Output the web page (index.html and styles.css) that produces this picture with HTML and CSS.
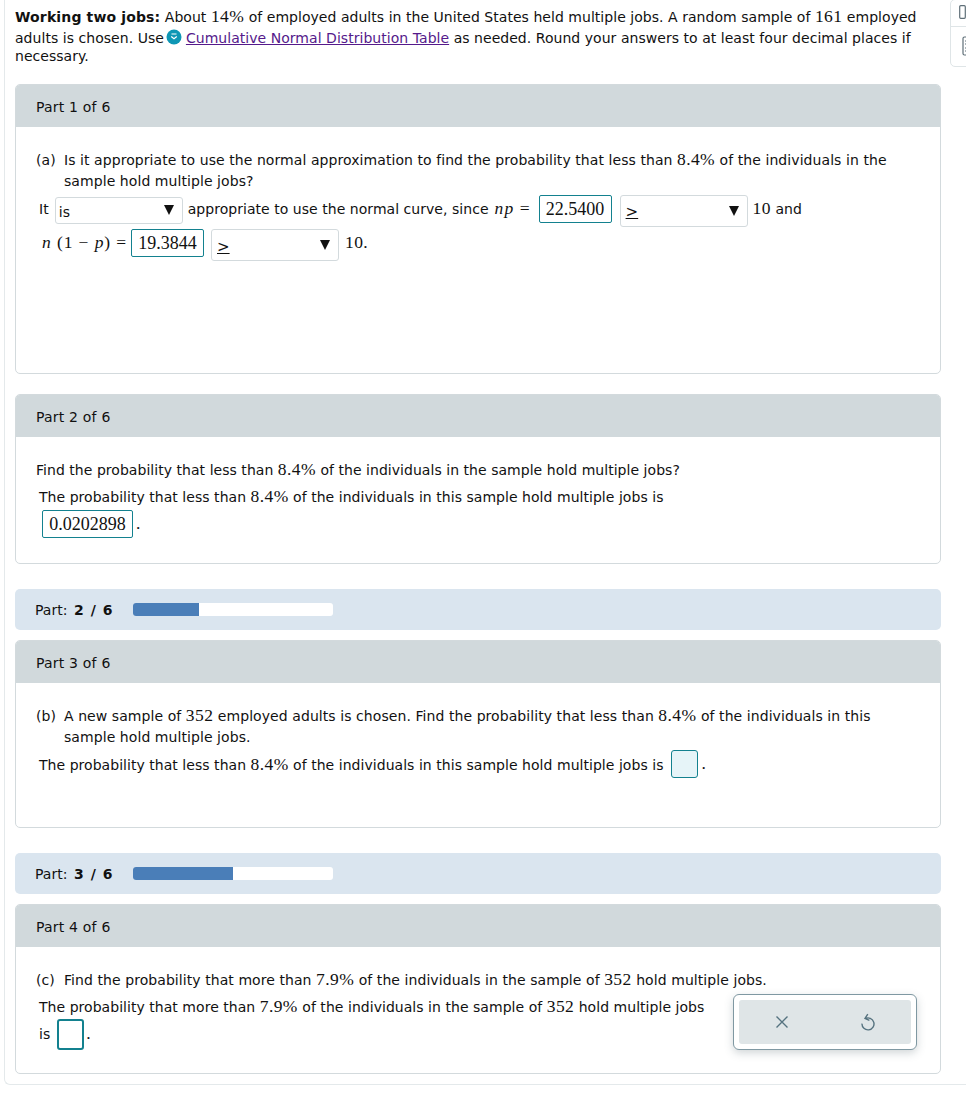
FILE: index.html
```html
<!DOCTYPE html>
<html lang="en">
<head>
<meta charset="utf-8">
<title>Working two jobs</title>
<link rel="stylesheet" href="styles.css">
</head>
<body>
<main class="sheet">
  <div class="intro">
    <div class="line"><b>Working two jobs:</b> About <span class="m">14%</span> of employed adults in the United States held multiple jobs. A random sample of <span class="m">161</span> employed</div>
    <div class="line">adults is chosen. Use <svg class="badge" viewBox="0 0 16 16" width="16" height="16"><circle cx="8" cy="8" r="7.5" fill="#0e97b5"/><path d="M5.5 5h5M5.2 7.5l2.8 2.2 2.8-2.2" fill="none" stroke="#fff" stroke-width="1.2"/></svg> <a href="#">Cumulative Normal Distribution Table</a> as needed. Round your answers to at least four decimal places if</div>
    <div class="line short">necessary.</div>
  </div>

  <section class="card c1">
    <header class="head">Part 1 of 6</header>
    <div class="body">
      <div class="q"><span class="tag">(a)</span><span>Is it appropriate to use the normal approximation to find the probability that less than <span class="m">8.4%</span> of the individuals in the<br>sample hold multiple jobs?</span></div>
      <div class="row r1">
        <span>It</span>
        <span class="sel sel-a"><span class="small">is</span><i class="tri"></i></span>
        <span>appropriate to use the normal curve, since</span>
        <span class="m eq"><em>np</em> =</span>
        <span class="ans">22.5400</span>
        <span class="sel sel-b"><u class="ge">&gt;</u><i class="tri"></i></span>
        <span><span class="m">10</span> and</span>
      </div>
      <div class="row r2">
        <span class="m eq2"><em>n</em> (1 − <em>p</em>) =</span>
        <span class="ans">19.3844</span>
        <span class="sel sel-b"><u class="ge">&gt;</u><i class="tri"></i></span>
        <span class="m">10.</span>
      </div>
    </div>
  </section>

  <section class="card c2">
    <header class="head">Part 2 of 6</header>
    <div class="body">
      <div class="plain">Find the probability that less than <span class="m">8.4%</span> of the individuals in the sample hold multiple jobs?</div>
      <div class="para">The probability that less than <span class="m">8.4%</span> of the individuals in this sample hold multiple jobs is</div>
      <div class="row r3"><span class="ans wide">0.0202898</span><span class="m">.</span></div>
    </div>
  </section>

  <div class="progress p2">
    <span>Part: <b>2 / 6</b></span>
    <span class="track"><span class="fill" style="width:33%"></span></span>
  </div>

  <section class="card c3">
    <header class="head">Part 3 of 6</header>
    <div class="body">
      <div class="q"><span class="tag">(b)</span><span>A new sample of <span class="m">352</span> employed adults is chosen. Find the probability that less than <span class="m">8.4%</span> of the individuals in this<br>sample hold multiple jobs.</span></div>
      <div class="row r4"><span class="r4-text">The probability that less than <span class="m">8.4%</span> of the individuals in this sample hold multiple jobs is</span><span class="blank tint"></span><span class="m">.</span></div>
    </div>
  </section>

  <div class="progress p3">
    <span>Part: <b>3 / 6</b></span>
    <span class="track"><span class="fill" style="width:50%"></span></span>
  </div>

  <section class="card c4">
    <header class="head">Part 4 of 6</header>
    <div class="body">
      <div class="q"><span class="tag">(c)</span><span>Find the probability that more than <span class="m">7.9%</span> of the individuals in the sample of <span class="m">352</span> hold multiple jobs.</span></div>
      <div class="para p4">The probability that more than <span class="m">7.9%</span> of the individuals in the sample of <span class="m">352</span> hold multiple jobs</div>
      <div class="row r5"><span>is</span><span class="blank thick"></span><span class="m">.</span></div>
    </div>
  </section>
</main>

<aside class="tools">
  <svg class="tool-a" viewBox="0 0 7 14" width="7" height="14"><rect x="0.7" y="0.7" width="5.6" height="12.6" rx="1" fill="none" stroke="#5f6f78" stroke-width="1.2"/></svg>
  <div class="tool-sep"></div>
  <svg class="tool-b" viewBox="0 0 12 20" width="12" height="20"><rect x="1" y="1" width="11" height="18" rx="1.5" fill="none" stroke="#5f6f78" stroke-width="1.2"/><path d="M3 5h7M3 8h7M3 12h2M7 12h3M3 15h2M7 15h3" stroke="#5f6f78"/></svg>
</aside>

<div class="panel">
  <div class="panel-in">
    <svg viewBox="0 0 14 14" width="14" height="14"><path d="M1.5 1.5l11 11M12.5 1.5l-11 11" fill="none" stroke="#55727f" stroke-width="1.4"/></svg>
    <svg viewBox="0 0 16 18" width="16" height="18"><path d="M5.2 5.6A6 6 0 1 1 2 10.6M7.8 1.2L5 5.4l4.4 2" fill="none" stroke="#55727f" stroke-width="1.4"/></svg>
  </div>
</div>
</body>
</html>
```
FILE: styles.css
```css
* { box-sizing: border-box; }
html, body { margin: 0; padding: 0; background: #fff; }
body {
  font-family: "DejaVu Sans", Verdana, sans-serif;
  font-size: 14px;
  letter-spacing: .04px;
  color: #111;
  width: 966px;
  height: 1096px;
  overflow: hidden;
  position: relative;
}
b { letter-spacing: .14px; }
.sheet {
  margin-left: 4px;
  width: 962px;
  height: 1085px;
  border-left: 1px solid #e4e9eb;
  border-bottom: 1px solid #e4e9eb;
  border-bottom-left-radius: 6px;
  padding: 7px 0 0 10px;
  white-space: nowrap;
}
.intro { height: 77px; }
.line { height: 21px; line-height: 21px; }
.line.short { height: 17px; line-height: 17px; margin-top: -1px; }
.m { font-family: "Liberation Serif", "Times New Roman", serif; font-size: 17.5px; line-height: 1; letter-spacing: .4px; }
.badge { vertical-align: 4px; margin: -6px -1px -6px -2px; }
a { color: #551a8b; text-decoration: underline; }

.card {
  width: 926px;
  border: 1px solid #d3dadd;
  border-radius: 5px;
  overflow: hidden;
}
.head {
  height: 43px;
  margin: -1px -1px 0;
  padding-left: 21px;
  line-height: 46px;
  background: #d1d9dc;
  letter-spacing: .2px;
}
.body { padding: 23px 0 0 20px; }
.c1 { height: 290px; }
.c2 { height: 170px; margin-top: 20px; }
.c3 { height: 188px; }
.c4 { height: 170px; }
.q { display: flex; line-height: 21px; letter-spacing: .07px; }
.tag { width: 28px; flex: none; }
.row { display: flex; align-items: center; }
.r1 { margin: 1px 0 0 3px; height: 32px; }
.r1 .sel-a { margin: 2px 5px 0 6px; }
.r1 .eq { flex: none; width: 44px; margin-left: 6px; letter-spacing: 1.1px; }
.r1 .sel-b { margin: 3px 5px 0 8px; }
.r2 { margin: 2px 0 0 6px; height: 32px; }
.r2 .eq2 { flex: none; width: 89px; letter-spacing: .9px; }
.r2 .sel-b { margin: 4px 6px 0 7px; }

.sel {
  display: flex;
  align-items: center;
  justify-content: space-between;
  width: 128px;
  border: 1px solid #d3dadd;
  border-radius: 3px;
  background: #fff;
  padding: 0 8px 0 5px;
}
.sel-a { height: 27px; padding-left: 3px; }
.sel-b { height: 32px; }
.small { font-size: 14px; margin-top: 3px; }
.ge { font-size: 15px; margin-top: 3px; }
.tri {
  width: 0; height: 0;
  border-left: 5px solid transparent;
  border-right: 5px solid transparent;
  border-top: 10px solid #111;
}
.ans {
  display: block;
  width: 73px;
  height: 28px;
  border: 1px solid #13818f;
  border-radius: 2px;
  font-family: "Liberation Serif", serif;
  font-size: 18px;
  letter-spacing: 0;
  line-height: 26px;
  text-align: center;
  background: #fff;
}
.ans.wide { width: 91px; }
.plain { line-height: 21px; }
.para { margin: 6px 0 0 3px; line-height: 21px; }
.r3 { margin: 2px 0 0 6px; height: 28px; gap: 3px; }
.r4 { margin: 2px 0 0 3px; height: 28px; }
.r4-text { padding-top: 2px; }
.blank {
  display: block;
  width: 27px;
  height: 28px;
  margin: 0 4px 0 7px;
  border: 1px solid #13818f;
  border-radius: 3px;
}
.blank.tint { background: #e6f4f8; }
.blank.thick { height: 31px; border-width: 2px; margin: 0 2px 0 7px; }
.p4 { margin-top: 6px; }
.r5 { margin: -2px 0 0 3px; height: 36px; }

.progress {
  width: 926px;
  height: 41px;
  background: #dae5ef;
  border-radius: 5px;
  display: flex;
  align-items: center;
  padding-left: 20px;
}
.progress > span:first-child { width: 98px; }
.progress b { letter-spacing: 1px; margin-left: 2px; }
.p2 { margin: 25px 0 10px; }
.p3 { margin: 25px 0 10px; }
.track {
  display: block;
  width: 200px;
  height: 13px;
  background: #fff;
  border-radius: 3px;
  overflow: hidden;
}
.fill { display: block; height: 100%; background: #4a7eb8; }

.tools {
  position: absolute;
  left: 950px;
  top: -1px;
  width: 30px;
  height: 68px;
  border: 1px solid #dfe5e7;
  border-radius: 5px;
  padding: 5px 0 0 8px;
}
.tools svg { display: block; }
.tool-sep { height: 1px; margin: 7px 0 0 -8px; background: #dfe5e7; }
.tool-b { margin: 9px 0 0 3px; }
.panel {
  position: absolute;
  left: 733px;
  top: 994px;
  width: 184px;
  height: 56px;
  padding: 5px;
  background: #fff;
  border: 1px solid #7f98a2;
  border-radius: 6px;
  box-shadow: 0 3px 8px rgba(70, 90, 100, .25);
}
.panel-in {
  height: 100%;
  background: #dfe5e7;
  border-radius: 3px;
  display: flex;
  align-items: center;
  padding-left: 36px;
  gap: 71px;
}
```
